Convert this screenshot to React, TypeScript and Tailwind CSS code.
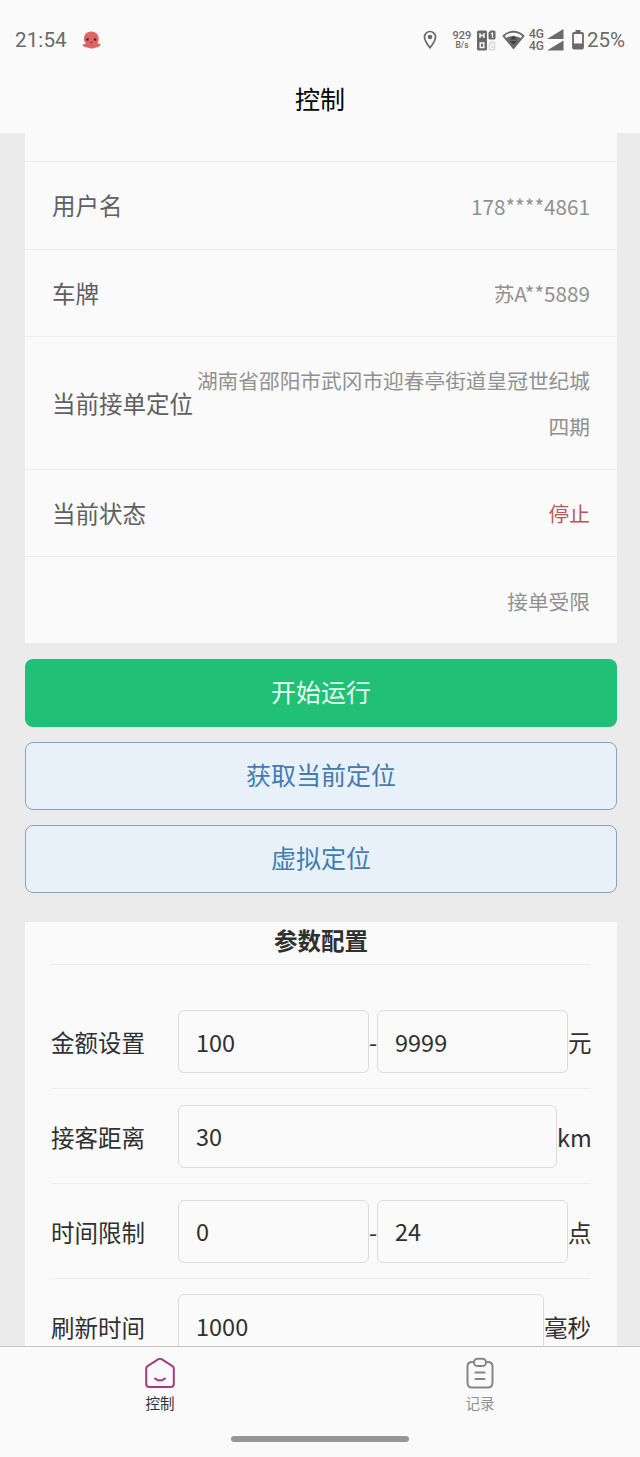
import type { ReactNode } from "react";

function StatusBar() {
  return (
    <div className="flex h-[80px] shrink-0 items-center pl-[15px] pr-[15px] font-[Roboto,sans-serif] text-[#6a6a6a]">
      <span className="w-[53px] whitespace-nowrap pt-px text-[20.6px] leading-none tracking-[0.1px]">21:54</span>
      <svg className="ml-[14px]" width="19" height="18" viewBox="0 0 19 18">
        <path d="M2 7.500C2 3.500 5 .6 9.300 .6s7.400 2.900 7.400 6.900c0 2-.5 3.500-1.200 4.800 1 .7 2.300.4 3 1 .3 1.400-1.200 2.800-3 2.700-1.500 1.200-3.300.7-4.300 1.300-1 .5-2 .5-3 0-1.300-.7-3 .1-4.300-1.200-1.700.2-3.400-1-3.200-2.500.7-.7 2.300-.3 3.200-1.200C2.400 11 2 9.500 2 7.500z" fill="#dd6563" />
        <circle cx="5.500" cy="8.500" r="1.300" fill="#5b2025" />
        <circle cx="13" cy="8.500" r="1.300" fill="#5b2025" />
        <ellipse cx="9.300" cy="11.500" rx="1.200" ry="1" fill="#a82c35" />
      </svg>
      <div className="flex-1" />
      <svg className="mr-px" width="14" height="20" viewBox="0 0 14 20" fill="none">
        <path d="M7 1.500A5.500 5.500 0 0 0 1.500 7c0 4 5.500 10.800 5.500 10.800S12.500 11 12.500 7A5.500 5.500 0 0 0 7 1.500z" stroke="#6a6a6a" strokeWidth="1.700" />
        <circle cx="7" cy="7" r="2.300" fill="#6a6a6a" />
      </svg>
      <div className="ml-[14px] flex w-[20px] flex-col items-center font-medium leading-none">
        <span className="text-[11px]">929</span>
        <span className="text-[8.500px]">B/s</span>
      </div>
      <svg className="ml-[5px]" width="19" height="21" viewBox="0 0 19 21">
        <rect x="0" y="0.500" width="10" height="20" rx="1.500" fill="#6a6a6a" />
        <path d="M3 3v5M7 3v5M3 5.500h4M3.200 13v4.500h3.600V13z" fill="none" stroke="#fafafa" strokeWidth="1.400" />
        <path d="M13.500 .5H17a1.500 1.500 0 0 1 1.500 1.500v6A1.500 1.500 0 0 1 17 9.500h-4A1.500 1.500 0 0 1 11.500 8V2.700z" fill="#6a6a6a" />
        <path d="M14 4l1.500-1v5" fill="none" stroke="#fafafa" strokeWidth="1.200" />
        <path d="M13.500 11.500H17a1.500 1.500 0 0 1 1.500 1.500v6a1.500 1.500 0 0 1-1.500 1.500h-4a1.500 1.500 0 0 1-1.500-1.500v-5.300z" fill="#dedede" />
        <path d="M13.500 14h3v2h-3v2.500h3" fill="none" stroke="#fafafa" />
      </svg>
      <svg className="ml-[6px]" width="23" height="20" viewBox="0 0 23 20">
        <path d="M1.500 6C7.300 .3 15.700 .3 21.500 6L11.500 18z" fill="none" stroke="#6a6a6a" strokeWidth="1.800" />
        <path d="M3.500 8.500c4.500-3.500 11.500-3.500 16 0L11.500 18z" fill="#6a6a6a" />
        <path d="M11.500 5.500l3.500 4H8zM8 11h7l-3.500 3.600z" fill="#414141" />
      </svg>
      <div className="ml-[4px] mr-px flex w-[16px] flex-col text-[12px] font-medium leading-[12px]">
        <span>4G</span>
        <span>4G</span>
      </div>
      <svg className="ml-px" width="17" height="22" viewBox="0 0 17 22" fill="#6a6a6a">
        <path d="M0 10L16.500 0v10zM0 21.500l16.500-10v10z" />
      </svg>
      <svg className="ml-[8px]" width="12" height="20" viewBox="0 0 12 20">
        <path d="M3.500 0h5v2.500h-5z" fill="#6a6a6a" />
        <rect x="1" y="3" width="10" height="15.500" rx="1" fill="none" stroke="#6a6a6a" strokeWidth="1.800" />
        <path d="M1 13.500h10v5H1z" fill="#6a6a6a" />
      </svg>
      <span className="ml-[3px] w-[38px] whitespace-nowrap pt-px text-[20.500px] leading-none">25%</span>
    </div>
  );
}

function InfoRow({ label, children, className = "h-[87.500px]", tone = "text-[#919191]" }: {
  label?: string;
  children: ReactNode;
  className?: string;
  tone?: string;
}) {
  return (
    <div className={`flex shrink-0 items-center justify-between border-t border-[#eeeeee] px-[27px] pt-px ${className}`}>
      <span className="shrink-0 whitespace-nowrap text-[23.500px] text-[#606060]">{label}</span>
      <span className={`whitespace-nowrap text-right text-[20.700px] leading-[46px] ${tone}`}>{children}</span>
    </div>
  );
}

function Field({ value, className }: { value: string; className: string }) {
  return (
    <input
      className={`h-[63px] shrink-0 rounded-[6px] border border-[#dcdcdc] bg-transparent pl-[17px] text-[23.500px] text-[#303030] outline-none ${className}`}
      defaultValue={value}
    />
  );
}

function ConfigRow({ label, unit, children }: { label: string; unit: string; children: ReactNode }) {
  return (
    <div className="flex h-[94.800px] shrink-0 items-center border-b border-[#eeeeee] whitespace-nowrap">
      <span className="w-[127px] shrink-0 pt-[3px]">{label}</span>
      {children}
      <span className="pt-[3px]">{unit}</span>
    </div>
  );
}

function Dash() {
  return <span className="w-[8px] shrink-0 pt-[3px] text-center">-</span>;
}

export default function App() {
  return (
    <div className="flex h-[1457px] w-[640px] flex-col overflow-hidden bg-[#fafafa] font-['Noto_Sans_CJK_SC',sans-serif]">
      <StatusBar />
      <header className="flex h-[53px] shrink-0 items-start justify-center text-[25px] leading-[36px] text-black">控制</header>

      <main className="flex h-[1213px] shrink-0 flex-col overflow-hidden bg-[#ebebeb] pl-[25px] pr-[23px]">
        <section className="flex h-[510px] shrink-0 flex-col overflow-hidden bg-[#fafafa] pt-[28px]">
          <InfoRow label="用户名">178****4861</InfoRow>
          <InfoRow label="车牌">苏A**5889</InfoRow>
          <InfoRow label="当前接单定位" className="h-[132.500px]">湖南省邵阳市武冈市迎春亭街道皇冠世纪城<br />四期</InfoRow>
          <InfoRow label="当前状态" tone="text-[#b9575b]">停止</InfoRow>
          <InfoRow>接单受限</InfoRow>
        </section>

        <div className="mt-[16px] flex shrink-0 flex-col gap-[15px] text-[25px]">
          <button className="h-[68px] rounded-[8px] bg-[#20c077] pb-[2px] text-[#e4fff0]">开始运行</button>
          <button className="h-[68px] rounded-[8px] border border-[#8aa3bc] bg-[#e8f0fa] pb-[2px] text-[#427cb0]">获取当前定位</button>
          <button className="h-[68px] rounded-[8px] border border-[#8aa3bc] bg-[#e8f0fa] pb-[2px] text-[#427cb0]">虚拟定位</button>
        </div>

        <section className="mt-[29px] flex shrink-0 flex-col bg-[#fafafa] px-[26px] text-[23.500px] text-[#303030]">
          <h2 className="h-[43px] border-b border-[#eeeeee] text-center font-bold leading-[37px]">参数配置</h2>
          <div className="h-[29.700px]" />
          <ConfigRow label="金额设置" unit="元">
            <Field value="100" className="w-[191px]" />
            <Dash />
            <Field value="9999" className="w-[191px]" />
          </ConfigRow>
          <ConfigRow label="接客距离" unit="km">
            <Field value="30" className="w-[379px]" />
          </ConfigRow>
          <ConfigRow label="时间限制" unit="点">
            <Field value="0" className="w-[191px]" />
            <Dash />
            <Field value="24" className="w-[191px]" />
          </ConfigRow>
          <ConfigRow label="刷新时间" unit="毫秒">
            <Field value="1000" className="w-[366px]" />
          </ConfigRow>
        </section>
      </main>

      <nav className="flex h-[111px] shrink-0 flex-col items-center border-t border-[#c4c4c4] bg-[#fafafa]">
        <div className="grid h-[89px] w-full grid-cols-2 text-[14.500px] leading-[20px]">
          <div className="flex flex-col items-center pt-[10px] text-[#303030]">
            <svg width="32" height="32" viewBox="0 0 32 32" fill="none" stroke="#a73b82" strokeWidth="2" strokeLinecap="round" strokeLinejoin="round">
              <path d="M14.500 2.200Q16 1.300 17.500 2.200L28.500 9.200Q29.800 10 29.800 11.500V27Q29.800 30 26.800 30H5.200Q2.200 30 2.200 27V11.500Q2.200 10 3.500 9.200z" />
              <path d="M11 21.500Q16 25.500 21 21.500" />
            </svg>
            <span className="mt-[4px]">控制</span>
          </div>
          <div className="flex flex-col items-center pt-[10px] text-[#919191]">
            <svg width="32" height="32" viewBox="0 0 32 32" fill="none" stroke="#858585" strokeWidth="2" strokeLinecap="round" strokeLinejoin="round">
              <path d="M10 5H8Q3.500 5 3.500 9.500V25.500Q3.500 30.500 8 30.500H24Q28.500 30.500 28.500 25.500V9.500Q28.500 5 24 5H22" />
              <rect x="10" y="1.700" width="12" height="7.300" rx="3.600" />
              <path d="M11.500 15.500h9M11.500 22h9" />
            </svg>
            <span className="mt-[4px]">记录</span>
          </div>
        </div>
        <div className="h-[6px] w-[178px] rounded-full bg-[#969696]" />
      </nav>
    </div>
  );
}
